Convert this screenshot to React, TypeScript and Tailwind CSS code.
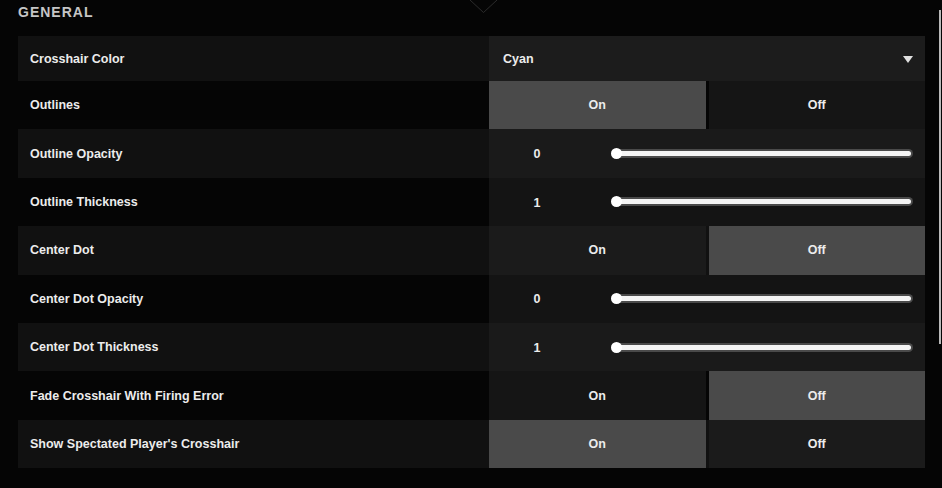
type Row =
  | { label: string; kind: "select"; value: string }
  | { label: string; kind: "toggle"; on: boolean }
  | { label: string; kind: "slider"; value: number };

const rows: Row[] = [
  { label: "Crosshair Color", kind: "select", value: "Cyan" },
  { label: "Outlines", kind: "toggle", on: true },
  { label: "Outline Opacity", kind: "slider", value: 0 },
  { label: "Outline Thickness", kind: "slider", value: 1 },
  { label: "Center Dot", kind: "toggle", on: false },
  { label: "Center Dot Opacity", kind: "slider", value: 0 },
  { label: "Center Dot Thickness", kind: "slider", value: 1 },
  { label: "Fade Crosshair With Firing Error", kind: "toggle", on: false },
  { label: "Show Spectated Player's Crosshair", kind: "toggle", on: true },
];

function Toggle({ on, striped }: { on: boolean; striped: boolean }) {
  const idle = striped ? "bg-[#1b1b1b]" : "bg-[#151515]";
  return (
    <div className="flex h-full gap-[3px]">
      <div className={`flex flex-1 items-center justify-center pt-[1px] ${on ? "bg-[#4a4a4a]" : idle}`}>On</div>
      <div className={`flex flex-1 items-center justify-center pt-[1px] ${!on ? "bg-[#4a4a4a]" : idle}`}>Off</div>
    </div>
  );
}

function Slider({ value, striped }: { value: number; striped: boolean }) {
  return (
    <div className={`flex h-full items-center ${striped ? "bg-[#1a1a1a]" : "bg-[#141414]"}`}>
      <div className="w-[96px] pt-[2px] text-center">{value}</div>
      <div className="relative ml-[28px] mr-[12px] flex-1">
        <div className="h-[9px] rounded-full bg-[#4a4a4a] p-[2px]">
          <div className="h-full rounded-full bg-[#f4f4f4]" />
        </div>
        <div className="absolute left-[-2px] top-[-1px] h-[11px] w-[11px] rounded-full bg-white" />
      </div>
    </div>
  );
}

function Select({ value }: { value: string }) {
  return (
    <div className="flex h-full items-center justify-between bg-[#1c1c1c] pl-[14px] pr-[12px] pt-[1px]">
      <span>{value}</span>
      <svg width="10" height="7" viewBox="0 0 10 7">
        <path d="M0 0 H10 L5 7 Z" fill="#e0e0e0" />
      </svg>
    </div>
  );
}

export default function App() {
  return (
    <div
      className="relative h-[488px] w-[942px] overflow-hidden bg-[#050505] text-[#ececec]"
      style={{ fontFamily: '"Liberation Sans", Arial, sans-serif' }}
    >
      {/* little chevron hanging from the tab bar */}
      <svg className="absolute left-[468px] top-0" width="32" height="14" viewBox="0 0 32 14">
        <path d="M2 0 L15.5 12.5 L29 0" stroke="#2c2c2c" strokeWidth="1" fill="none" />
      </svg>

      {/* scrollbar */}
      <div className="absolute right-[1px] top-[10px] h-[334px] w-[2px] bg-[#b9b9b9]" />

      <div className="pl-[18px] pr-[17px]">
        <h2 className="h-[36px] pt-[2px] text-[14px] font-bold tracking-[1px] text-[#c6c6c6]">GENERAL</h2>

        <div className="text-[12.5px] font-bold">
          {rows.map((row, i) => {
            const striped = i % 2 === 0;
            return (
              <div
                key={row.label}
                className={`flex ${i === 0 ? "h-[45px]" : "h-[48.4px]"} ${striped ? "bg-[#111111]" : ""}`}
              >
                <div className="flex w-[471px] items-center pl-[12px] pt-[1px]">{row.label}</div>
                <div className="flex-1">
                  {row.kind === "select" && <Select value={row.value} />}
                  {row.kind === "toggle" && <Toggle on={row.on} striped={striped} />}
                  {row.kind === "slider" && <Slider value={row.value} striped={striped} />}
                </div>
              </div>
            );
          })}
        </div>
      </div>
    </div>
  );
}
